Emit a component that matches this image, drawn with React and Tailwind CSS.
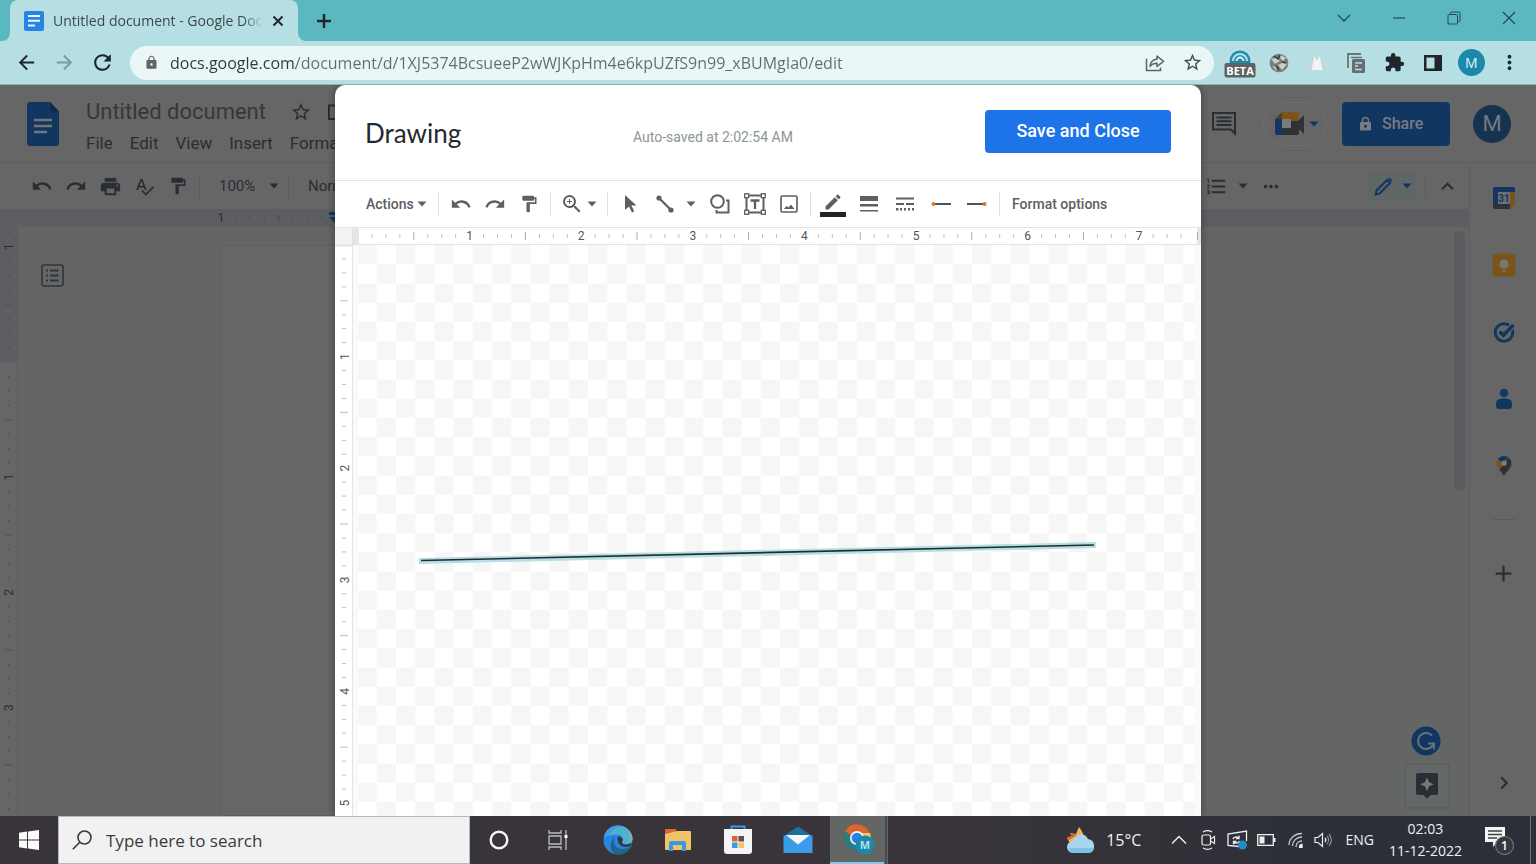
import React from "react";
import {
  MdUndo, MdRedo, MdPrint, MdSpellcheck, MdFormatPaint, MdZoomIn, MdStarBorder, MdLock, MdMoreVert,
  MdMoreHoriz, MdFormatListNumbered, MdKeyboardArrowUp, MdAdd, MdArrowBack, MdArrowForward,
  MdRefresh, MdExtension, MdEdit, MdChevronRight,
} from "react-icons/md";

const range = (a, b) => Array.from({ length: b - a + 1 }, (_, i) => a + i);

function Caret({ className = "" }) {
  return (
    <svg width="10" height="6" viewBox="0 0 10 6" className={className} aria-hidden="true">
      <path d="M0.5 0.5h9L5 5.5z" fill="currentColor" />
    </svg>
  );
}

function IconButton({ label, className = "", children }) {
  return (
    <button aria-label={label} className={`flex shrink-0 items-center justify-center ${className}`}>
      {children}
    </button>
  );
}

/* ---------- Browser ---------- */

function DocFavicon() {
  return (
    <svg width="20" height="20" viewBox="0 0 20 20" className="shrink-0" aria-hidden="true">
      <rect width="20" height="20" rx="2" fill="#2684e8" />
      <path d="M4 5h12M4 9.700h12M4 14.500h7" stroke="#eef8fa" strokeWidth="2" />
    </svg>
  );
}

function TabStrip() {
  return (
    <div className="flex h-[41px] shrink-0 items-stretch bg-[#5bb8c1]">
      <div className="relative ml-[10px] flex w-72 items-center rounded-t-lg bg-[#b6dfe4] pl-[14px]">
        <svg className="absolute -left-2 bottom-0" width="8" height="8" viewBox="0 0 8 8" aria-hidden="true">
          <path d="M8 0v8H0a8 8 0 0 0 8-8z" fill="#b6dfe4" />
        </svg>
        <svg className="absolute -right-2 bottom-0" width="8" height="8" viewBox="0 0 8 8" aria-hidden="true">
          <path d="M0 0v8h8a8 8 0 0 1-8-8z" fill="#b6dfe4" />
        </svg>
        <DocFavicon />
        <span className="ml-[9px] w-[211px] shrink-0 overflow-hidden whitespace-nowrap text-sm text-[#3c484c] [mask-image:linear-gradient(to_right,#000_90%,transparent)]">
          Untitled document - Google Docs
        </span>
        <IconButton label="Close tab" className="ml-1 w-5 text-[#20242b]">
          <svg width="12" height="12" viewBox="0 0 12 12"><path d="M1.500 1.500l9 9M10.500 1.500l-9 9" stroke="currentColor" strokeWidth="2" /></svg>
        </IconButton>
      </div>
      <IconButton label="New tab" className="ml-[14px] w-6 text-[#20242b]">
        <svg width="14" height="14" viewBox="0 0 14 14"><path d="M7 0v14M0 7h14" stroke="currentColor" strokeWidth="2.400" /></svg>
      </IconButton>
      <div className="ml-auto flex h-[35px] text-[#23495a]">
        <IconButton label="Search tabs" className="w-[55px]">
          <svg width="14" height="8" viewBox="0 0 14 8" fill="none"><path d="M1 1l6 6 6-6" stroke="currentColor" strokeWidth="1.300" /></svg>
        </IconButton>
        <IconButton label="Minimize" className="w-[55px]">
          <svg width="12" height="2" viewBox="0 0 12 2"><path d="M0 1h12" stroke="currentColor" strokeWidth="1.200" /></svg>
        </IconButton>
        <IconButton label="Restore" className="w-[55px]">
          <svg width="14" height="14" viewBox="0 0 14 14" fill="none" stroke="currentColor">
            <rect x="1" y="3.500" width="9.500" height="9.500" rx="1" />
            <path d="M3.500 3.500V2a1 1 0 0 1 1-1H12a1 1 0 0 1 1 1v7.500a1 1 0 0 1-1 1h-1.500" />
          </svg>
        </IconButton>
        <IconButton label="Close" className="w-[55px]">
          <svg width="14" height="14" viewBox="0 0 14 14"><path d="M1 1l12 12M13 1L1 13" stroke="currentColor" strokeWidth="1.300" /></svg>
        </IconButton>
      </div>
    </div>
  );
}

function AddressBar() {
  return (
    <div className="flex h-11 shrink-0 items-center border-b border-[#8db1b6] bg-[#b6dfe4] text-[#20242b]">
      <div className="ml-[7px] grid w-[115px] grid-cols-3">
        <IconButton label="Back"><MdArrowBack size={23} /></IconButton>
        <IconButton label="Forward" className="text-[#7e9a9e]"><MdArrowForward size={23} /></IconButton>
        <IconButton label="Reload"><MdRefresh size={25} /></IconButton>
      </div>
      <div className="ml-2 flex h-[34px] min-w-0 flex-1 items-center rounded-full bg-[#ebf7f7] pl-[14px] pr-2">
        <MdLock size={15} className="shrink-0 text-[#5f6366]" />
        <input
          aria-label="Address"
          spellCheck={false}
          defaultValue="docs.google.com/document/d/1XJ5374BcsueeP2wWJKpHm4e6kpUZfS9n99_xBUMgIa0/edit"
          className="ml-[11px] min-w-0 flex-1 bg-[linear-gradient(to_right,#2b3a3f_126px,#5d6e70_126px)] bg-clip-text text-base text-transparent outline-none"
        />
        <IconButton label="Share page" className="w-[38px] text-[#5b6669]">
          <svg width="20" height="18" viewBox="0 0 20 18" fill="none" stroke="currentColor" strokeWidth="1.500">
            <path d="M1.500 4.500V16.500H15.500V13.500" />
            <path d="M5 12.500C5.500 8 8 5.500 12 5.300V2L18.500 7.300L12 12.500V9.300C9 9.300 6.500 10.300 5 12.500z" strokeLinejoin="round" />
          </svg>
        </IconButton>
        <IconButton label="Bookmark this tab" className="ml-1 w-7 text-[#414b4f]"><MdStarBorder size={21} /></IconButton>
      </div>
      <div className="ml-[7px] mr-[7px] flex w-[308px] items-center">
        <IconButton label="Beta extension" className="flex-1">
          <svg width="32" height="30" viewBox="0 0 32 30">
            <circle cx="16" cy="13" r="10.500" fill="#1f8cac" />
            <path d="M9 13a7 7 0 0 1 14 0" stroke="#b6dfe4" strokeWidth="2" fill="none" />
            <path d="M12.500 13a3.500 3.500 0 0 1 7 0" stroke="#dff3f5" strokeWidth="1.800" fill="none" />
            <rect x="0.500" y="15" width="31" height="14.500" rx="2" fill="#5d6265" />
            <text x="16" y="26.500" textAnchor="middle" fontSize="11" fontWeight="700" fill="#fff" fontFamily="Open Sans">BETA</text>
          </svg>
        </IconButton>
        <IconButton label="Globe extension" className="flex-1">
          <svg width="20" height="20" viewBox="0 0 20 20">
            <circle cx="10" cy="10" r="9.300" fill="#787c7e" />
            <path d="M2 6l6-1 3 3-5 3zM12 2l5 3-3 3-3-3zM9 12l6-3 3 2-5 6zM3 13l4 1 1 4z" fill="#c9cdcd" />
            <path d="M5 3l4 3 2-4M13 9l4 1M7 13l3 4" stroke="#33383b" strokeWidth="1.300" fill="none" />
          </svg>
        </IconButton>
        <IconButton label="Peaks extension" className="flex-1">
          <svg width="20" height="17" viewBox="0 0 20 17">
            <path d="M8 1L0.500 16H8z" fill="#cdd3d4" /><path d="M12 1l7.500 15H12z" fill="#cdd3d4" />
            <path d="M7.500 2l2.500 5 2.500-5 3 14h-11z" fill="#f3f4f4" />
          </svg>
        </IconButton>
        <IconButton label="Copy extension" className="flex-1">
          <svg width="18" height="20" viewBox="0 0 18 20">
            <path d="M1 15V1h13" stroke="#6b7578" strokeWidth="1.800" fill="none" />
            <path d="M4 4.500h11" stroke="#6b7578" strokeWidth="1.500" />
            <rect x="5" y="6" width="13" height="14" rx="1.500" fill="#676d70" />
            <path d="M8 10h7M8 13h3M8 16.500h7" stroke="#b6dfe4" strokeWidth="1.400" />
          </svg>
        </IconButton>
        <IconButton label="Extensions" className="flex-1"><MdExtension size={21} /></IconButton>
        <IconButton label="Side panel" className="flex-1">
          <svg width="18" height="18" viewBox="0 0 18 18"><path d="M0 1h18v16H0zM2.500 3.500v11h8v-11z" fill="currentColor" fillRule="evenodd" /></svg>
        </IconButton>
        <IconButton label="Profile" className="flex-1">
          <span className="flex size-[27px] items-center justify-center rounded-full bg-[#1c88ab] text-sm text-[#e3f4f6]">M</span>
        </IconButton>
        <IconButton label="Browser menu" className="flex-1"><MdMoreVert size={23} /></IconButton>
      </div>
    </div>
  );
}

/* ---------- Editor behind the dialog ---------- */

function DocsHeader() {
  return (
    <header className="flex h-[78px] shrink-0 items-center border-b border-[#5c5e60] px-[25px] text-[#292d34]">
      <svg width="33" height="44" viewBox="0 0 33 44" className="ml-[2px] shrink-0" aria-label="Docs">
        <path d="M3 0h20l9 9.500V41a3 3 0 0 1-3 3H3a3 3 0 0 1-3-3V3a3 3 0 0 1 3-3z" fill="#11365f" />
        <path d="M23 0l9 9.500h-7a2 2 0 0 1-2-2z" fill="#0c2a4c" />
        <path d="M7 18h18M7 24h18M7 30h13" stroke="#747576" strokeWidth="2.400" />
      </svg>
      <div className="ml-[26px] pt-2">
        <div className="flex h-8 items-center">
          <h1 className="text-[22px] leading-8 text-[#37363f]">Untitled document</h1>
          <IconButton label="Star" className="ml-6"><MdStarBorder size={22} /></IconButton>
          <IconButton label="Move" className="ml-4">
            <svg width="20" height="18" viewBox="0 0 20 18" fill="none" stroke="currentColor" strokeWidth="2"><path d="M1 2.500h6l2 2h10V16H1z" /></svg>
          </IconButton>
        </div>
        <nav className="flex h-8 items-center gap-[17px] text-[17px]">
          {["File", "Edit", "View", "Insert", "Format"].map((m) => <button key={m}>{m}</button>)}
        </nav>
      </div>
      <div className="ml-auto flex items-center">
        <IconButton label="Open comment history">
          <svg width="26" height="25" viewBox="0 0 26 25" fill="none" stroke="currentColor" strokeWidth="2">
            <path d="M2 2h22v20.500l-4-4H2z" /><path d="M5.500 6.500h15M5.500 10.300h15M5.500 14h15" />
          </svg>
        </IconButton>
        <button aria-label="Join a call" className="ml-[26px] flex h-11 w-16 items-center justify-center gap-1 rounded-full border border-[#6e6f70] pl-1">
          <svg width="30" height="24" viewBox="0 0 30 24">
            <path d="M7 0h15a2 2 0 0 1 2 2v7H15V7H7z" fill="#7b531c" />
            <path d="M0 7L7 0v7z" fill="#54401f" />
            <path d="M0 7h7v16H2a2 2 0 0 1-2-2z" fill="#11365f" />
            <path d="M7 16h8V9h9v12a2 2 0 0 1-2 2H7z" fill="#2e3138" />
            <path d="M23 9l6-6v19l-6-6z" fill="#2e3138" />
            <rect x="7" y="7" width="9" height="9" fill="#7a7b7b" />
          </svg>
          <Caret className="text-[#11365f]" />
        </button>
        <button className="ml-[15px] flex h-11 w-[108px] items-center rounded bg-[#11365f] pl-[18px] text-base font-medium text-[#767c82]">
          <svg width="11" height="14" viewBox="0 0 11 14" aria-hidden="true">
            <path d="M2.500 6V3.500a3 3 0 0 1 6 0V6" fill="none" stroke="currentColor" strokeWidth="1.500" />
            <rect y="5" width="11" height="8.500" rx="1" fill="currentColor" /><circle cx="5.500" cy="9.300" r="1.500" fill="#11365f" />
          </svg>
          <span className="ml-[11px]">Share</span>
        </button>
        <button aria-label="Account" className="ml-[23px] flex size-[38px] items-center justify-center rounded-full bg-[#15334f] text-[22px] text-[#747a80]">M</button>
      </div>
    </header>
  );
}

function DocsToolbar() {
  return (
    <div className="flex h-[46px] shrink-0 items-center text-[#292d34]">
      <div className="ml-[25px] flex items-center">
        <IconButton label="Undo" className="w-[34px]"><MdUndo size={22} /></IconButton>
        <IconButton label="Redo" className="w-[34px]"><MdRedo size={22} /></IconButton>
        <IconButton label="Print" className="w-[34px]"><MdPrint size={23} /></IconButton>
        <IconButton label="Spelling" className="w-[34px]"><MdSpellcheck size={21} /></IconButton>
        <IconButton label="Paint format" className="w-[34px]"><MdFormatPaint size={20} /></IconButton>
      </div>
      <span className="ml-1 h-6 w-px bg-[#5a5c5e]" />
      <button className="ml-[19px] flex w-[60px] items-center justify-between text-[15px]">100%<Caret /></button>
      <span className="ml-[9px] h-6 w-px bg-[#5a5c5e]" />
      <button className="ml-[19px] text-[15px]">Normal</button>
      <div className="ml-auto flex items-center">
        <IconButton label="Numbered list"><MdFormatListNumbered size={23} /></IconButton>
        <Caret className="ml-[10px]" />
        <IconButton label="More" className="ml-3 w-[22px]"><MdMoreHoriz size={23} /></IconButton>
        <button aria-label="Editing mode" className="ml-[85px] flex h-[31px] w-[51px] items-center justify-center gap-[9px] rounded bg-[#606565] text-[#11365f]">
          <svg width="19" height="19" viewBox="0 0 19 19"><path d="M1.500 17.500l1-4L13 3l3 3L5.500 16.500z" fill="none" stroke="currentColor" strokeWidth="2" /><path d="M14 2l1.500-1.500 3 3L17 5z" fill="currentColor" /></svg>
          <Caret />
        </button>
        <span className="ml-[7px] h-6 w-px bg-[#5a5c5e]" />
        <IconButton label="Hide the menus" className="ml-[9px] mr-[9px]"><MdKeyboardArrowUp size={25} /></IconButton>
      </div>
    </div>
  );
}

function DocsVerticalRuler() {
  const zero = 135;
  const step = 14.4;
  return (
    <svg className="h-full w-[18px] shrink-0 bg-[#666]" aria-label="Vertical ruler">
      <rect width="18" height={zero} fill="#5d5e61" />
      <path d="M17.500 135V2000" stroke="#5c5e5e" />
      {range(-9, 31).map((i) => {
        const y = zero + i * step;
        if (i % 8 === 0) {
          if (i === 0) return null;
          return (
            <text key={i} transform={`translate(13 ${y}) rotate(-90)`} textAnchor="middle" fontSize="12" fill="#292d34">
              {Math.abs(i / 8)}
            </text>
          );
        }
        const r = i % 4 === 0 ? 4 : 1;
        return <path key={i} d={`M${8.5 - r} ${y}h${r * 2}`} stroke={i % 4 === 0 ? "#515356" : "#45484c"} />;
      })}
    </svg>
  );
}

function DocsHorizontalRuler() {
  return (
    <svg className="h-[18px] w-full shrink-0 bg-[#5d5e61]" aria-label="Horizontal ruler">
      <text x="221" y="13" textAnchor="middle" fontSize="12" fill="#292d34">1</text>
      {range(1, 7).map((i) => {
        const x = 221 + i * 14.4;
        const r = i === 4 ? 3 : 1;
        return <path key={i} d={`M${x} ${9 - r}v${r * 2}`} stroke="#45484c" />;
      })}
      <path d="M329 3h14v3h-14zM329 8h14l-7 7z" fill="#11365f" />
    </svg>
  );
}

const panelIcons = {
  Calendar: (
    <>
      <path d="M1 3a2 2 0 0 1 2-2h18a2 2 0 0 1 2 2v3H1z" fill="#11365f" />
      <path d="M1 6h5v12H1z" fill="#11365f" /><path d="M18 6h5v12h-5z" fill="#7b531c" />
      <path d="M1 18h17v5H3a2 2 0 0 1-2-2z" fill="#2e3138" /><path d="M18 18h5l-5 5z" fill="#7b531c" />
      <rect x="6" y="6" width="12" height="12" fill="#6b7075" />
      <text x="12" y="16" textAnchor="middle" fontSize="10" fontWeight="700" fill="#11365f">31</text>
    </>
  ),
  Keep: (
    <>
      <rect x="0.500" y="0.500" width="23" height="23" rx="2" fill="#7b531c" />
      <circle cx="12" cy="11" r="4.700" fill="#7a7771" /><path d="M10 18h4" stroke="#7a7771" strokeWidth="1.400" />
    </>
  ),
  Tasks: (
    <>
      <circle cx="12" cy="12.500" r="8.800" fill="none" stroke="#11365f" strokeWidth="3" />
      <path d="M7.500 12l3.500 3.500L21 5.500" stroke="#666" strokeWidth="6" fill="none" />
      <path d="M7.500 11.500l3.800 3.800L21.500 5" stroke="#11365f" strokeWidth="3.500" fill="none" />
    </>
  ),
  Contacts: (
    <>
      <circle cx="12" cy="6" r="4.200" fill="#11365f" />
      <path d="M4 17.500c0-4.500 2.500-6 8-6s8 1.500 8 6c0 3-1 4.500-2.500 4.500h-11C5 22 4 20.500 4 17.500z" fill="#11365f" />
    </>
  ),
  Maps: (
    <>
      <path d="M12 2a7.500 7.500 0 0 0-6 3l4 4 6.500-5.500A7.500 7.500 0 0 0 12 2z" fill="#11365f" />
      <path d="M6 5a7.500 7.500 0 0 0 0 9l1.500 2L13 10 8 7z" fill="#7b531c" />
      <path d="M16.500 3.500a7.500 7.500 0 0 1 1.500 10.500c-3 4-4.500 5-6 8.500-1-2.500-2.500-4-4.500-6.500z" fill="#2e3138" />
      <circle cx="12" cy="9.300" r="2.700" fill="#7a7b7b" />
    </>
  ),
};

function SidePanel() {
  return (
    <aside className="flex w-[67px] shrink-0 flex-col items-center border-l border-[#5c5f5e] pb-5 pl-px pt-[23px] text-[#292d34]">
      <div className="flex flex-col gap-[43px]">
        {Object.entries(panelIcons).map(([name, art]) => (
          <IconButton key={name} label={name} className="size-6">
            <svg width="24" height="24" viewBox="0 0 24 24">{art}</svg>
          </IconButton>
        ))}
      </div>
      <span className="mt-[41px] h-px w-6 shrink-0 bg-[#5a5c5e]" />
      <IconButton label="Get add-ons" className="mt-10"><MdAdd size={27} /></IconButton>
      <IconButton label="Hide side panel" className="mt-auto"><MdChevronRight size={26} /></IconButton>
    </aside>
  );
}

function DocsEditor() {
  return (
    <div className="flex min-h-0 flex-1">
      <div className="flex min-w-0 flex-1 flex-col">
        <DocsToolbar />
        <DocsHorizontalRuler />
        <div className="flex min-h-0 flex-1">
          <DocsVerticalRuler />
          <div className="flex min-w-0 flex-1 items-stretch bg-[#636664]">
            <div className="w-[202px] shrink-0 pl-[23px] pt-[37px] text-[#33343b]">
              <IconButton label="Show document outline">
                <svg width="23" height="23" viewBox="0 0 23 23" fill="none" stroke="currentColor">
                  <rect x="1" y="1" width="21" height="21" rx="2" strokeWidth="1.600" />
                  <path d="M5 6.500h2M9 6.500h8.500M5 11.500h2M9 11.500h8.500M5 16.500h2M9 16.500h8.500" strokeWidth="1.800" />
                </svg>
              </IconButton>
            </div>
            <div className="mt-[18px] w-[816px] border border-[#5b5d5d] bg-[#666]" />
            <div className="ml-auto flex flex-col items-end justify-between pb-[7px] pt-1">
              <div className="mr-1 h-[260px] w-[11px] rounded-full bg-[#5a5b5f]" />
              <div className="mr-[19px] flex flex-col items-center gap-[7px]">
                <IconButton label="Grammarly" className="mr-[3px]">
                  <svg width="30" height="30" viewBox="0 0 30 30">
                    <circle cx="15" cy="15" r="14.500" fill="#11365f" />
                    <path d="M21 9.500A8 8 0 1 0 22.500 18" fill="none" stroke="#687078" strokeWidth="2" />
                    <path d="M17 17.500h6v6" fill="none" stroke="#687078" strokeWidth="2" />
                  </svg>
                </IconButton>
                <IconButton label="Explore" className="size-[46px] rounded border-2 border-[#5d6060] bg-[#656666]">
                  <svg width="22" height="26" viewBox="0 0 22 26">
                    <path d="M2 0h18a2 2 0 0 1 2 2v18a2 2 0 0 1-2 2h-5.500L11 25.500 7.500 22H2a2 2 0 0 1-2-2V2a2 2 0 0 1 2-2z" fill="#292d34" />
                    <path d="M11 4.500l2 4.800 4.800 2-4.800 2-2 4.700-2-4.700-4.800-2 4.800-2z" fill="#77797a" />
                  </svg>
                </IconButton>
              </div>
            </div>
          </div>
        </div>
      </div>
      <SidePanel />
    </div>
  );
}

/* ---------- Drawing dialog ---------- */

const STEP = 13.95;

function HorizontalRuler() {
  return (
    <svg className="block h-[18px] w-full border-y border-[#e2e4e4] bg-white" aria-label="Horizontal ruler">
      <rect width="17" height="16" fill="#f2f3f3" />
      <path d="M17.500 0v16" stroke="#e2e4e4" />
      <rect x="18" width="6" height="16" fill="#e3e6e6" />
      <rect x="862" width="4" height="16" fill="#e3e6e6" />
      {range(1, 59).map((i) => {
        const x = 23 + i * STEP;
        if (i % 8 === 0) {
          return <text key={i} x={x} y="12" textAnchor="middle" fontSize="12" fill="#50585a">{i / 8}</text>;
        }
        return <path key={i} d={i % 4 === 0 ? `M${x} 4v8` : `M${x} 6v4`} stroke={i % 4 === 0 ? "#a4acad" : "#bcc3c4"} />;
      })}
      <path d="M862.500 4v8" stroke="#a4acad" />
    </svg>
  );
}

function VerticalRuler() {
  return (
    <svg className="block h-full w-[18px] shrink-0 border-r border-[#e2e4e4] bg-white" aria-label="Vertical ruler">
      <rect width="17" height="2" fill="#e9ebeb" />
      {range(1, 40).map((i) => {
        const y = i * STEP;
        if (i % 8 === 0) {
          return (
            <text key={i} transform={`translate(14 ${y}) rotate(-90)`} textAnchor="middle" fontSize="12" fill="#50585a">{i / 8}</text>
          );
        }
        return <path key={i} d={i % 4 === 0 ? `M5 ${y}h8` : `M7 ${y}h4`} stroke="#b9c0c1" />;
      })}
    </svg>
  );
}

function Canvas() {
  return (
    <svg className="block h-full min-w-0 flex-1 bg-[#fafafa]" aria-label="Drawing canvas">
      <defs>
        <pattern id="checker" width="38.400" height="38.400" patternUnits="userSpaceOnUse" x="4.600" y="0">
          <rect width="38.400" height="38.400" fill="#fff" />
          <path d="M0 0h19.200v19.200H0zM19.200 19.200h19.200v19.200H19.200z" fill="#f6f6f6" />
        </pattern>
      </defs>
      <rect x="4.600" width="837" height="100%" fill="url(#checker)" />
      <path d="M66 316L743 300" stroke="#b5dee5" strokeWidth="6" />
      <path d="M68 315.500L741 300" stroke="#252a30" strokeWidth="1.600" />
    </svg>
  );
}

function Separator({ className }) {
  return <span className={`h-6 w-px shrink-0 bg-[#dfe1e1] ${className}`} />;
}

function DrawingToolbar() {
  return (
    <div className="flex h-[46px] items-center pl-[31px] text-[#5c6062]">
      <button className="flex w-[61px] items-center justify-between text-sm font-medium">Actions<Caret /></button>
      <Separator className="ml-[11px] mr-[5px]" />
      <IconButton label="Undo" className="w-[34px]"><MdUndo size={22} /></IconButton>
      <IconButton label="Redo" className="w-[34px]"><MdRedo size={22} /></IconButton>
      <IconButton label="Paint format" className="w-[34px]"><MdFormatPaint size={20} /></IconButton>
      <Separator className="mx-1" />
      <IconButton label="Zoom" className="w-[34px]"><MdZoomIn size={24} /></IconButton>
      <Caret className="-ml-[2px] shrink-0" />
      <Separator className="ml-[10px] mr-[5px]" />
      <IconButton label="Select" className="w-[34px]">
        <svg width="13" height="18" viewBox="0 0 13 18"><path d="M1 0l11.500 10.500H7.300l3 5.700-2.300 1.200-3-6L1 15z" fill="currentColor" /></svg>
      </IconButton>
      <IconButton label="Line" className="w-9">
        <svg width="18" height="18" viewBox="0 0 18 18"><path d="M3 3l12 12" stroke="currentColor" strokeWidth="2.200" /><circle cx="3" cy="3" r="2.600" fill="currentColor" /><circle cx="15" cy="15" r="2.600" fill="currentColor" /></svg>
      </IconButton>
      <Caret className="ml-[3px] mr-[6px] shrink-0" />
      <IconButton label="Shape" className="w-9">
        <svg width="20" height="20" viewBox="0 0 20 20" fill="none" stroke="currentColor" strokeWidth="2"><circle cx="7.500" cy="7.500" r="6.300" /><path d="M16 6.500h2.500V18.500H6.500V16" /></svg>
      </IconButton>
      <IconButton label="Text box" className="w-[34px]">
        <svg width="22" height="22" viewBox="0 0 22 22" fill="none" stroke="currentColor">
          <rect x="2.500" y="2.500" width="17" height="17" strokeWidth="2" />
          <g fill="#fff" strokeWidth="1.300"><rect x="0.700" y="0.700" width="4" height="4" /><rect x="17.300" y="0.700" width="4" height="4" /><rect x="0.700" y="17.300" width="4" height="4" /><rect x="17.300" y="17.300" width="4" height="4" /></g>
          <path d="M6.500 7.500h9M11 7.500v8.500" strokeWidth="2.300" />
        </svg>
      </IconButton>
      <IconButton label="Image" className="w-[34px]">
        <svg width="18" height="18" viewBox="0 0 18 18"><rect x="1" y="1" width="16" height="16" rx="1.500" fill="none" stroke="currentColor" strokeWidth="1.700" /><path d="M4 14l2.500-3 2 1.500 2.500-3 1.500 2 2 2.500z" fill="currentColor" /></svg>
      </IconButton>
      <Separator className="mx-1" />
      <IconButton label="Line color" className="w-9">
        <span className="flex flex-col items-center"><MdEdit size={20} /><span className="h-[5px] w-[26px] bg-[#20252c]" /></span>
      </IconButton>
      <IconButton label="Line weight" className="w-9">
        <svg width="18" height="16" viewBox="0 0 18 16" fill="currentColor"><path d="M0 0h18v5H0zM0 8h18v2.500H0zM0 14h18v1.500H0z" /></svg>
      </IconButton>
      <IconButton label="Line dash" className="w-9">
        <svg width="18" height="14" viewBox="0 0 18 14" fill="currentColor"><path d="M0 0.500h18v2H0zM0 6h8v2H0zM10 6h8v2h-8zM0 11h2.500v2.500H0zM4 11h2v2.500H4zM8 11h2v2.500H8zM12 11h2v2.500h-2zM16 11h2v2.500h-2z" /></svg>
      </IconButton>
      <IconButton label="Line start" className="w-9">
        <svg width="20" height="6" viewBox="0 0 20 6"><path d="M2 3h18" stroke="#4e5254" strokeWidth="2" /><circle cx="2.500" cy="3" r="2" fill="#e0751f" /></svg>
      </IconButton>
      <IconButton label="Line end" className="w-9">
        <svg width="20" height="6" viewBox="0 0 20 6"><path d="M0 3h18" stroke="#4e5254" strokeWidth="2" /><circle cx="17.500" cy="3" r="2" fill="#e0751f" /></svg>
      </IconButton>
      <Separator className="ml-1 mr-3" />
      <button className="whitespace-nowrap text-sm font-medium">Format options</button>
    </div>
  );
}

function DrawingDialog() {
  return (
    <div className="absolute inset-0 flex justify-center">
      <section role="dialog" aria-label="Drawing" className="flex h-full w-[866px] flex-col overflow-hidden rounded-t-[10px] bg-white shadow-[0_0_8px_rgba(0,0,0,0.35)]">
        <div className="flex h-24 shrink-0 items-center border-b border-[#e2e4e4] px-[30px] pb-[3px]">
          <h2 className="w-[268px] pt-1 font-[Lato] text-[26px] text-[#25292e]">Drawing</h2>
          <p className="mt-3 text-sm text-[#8b9596]">Auto-saved at 2:02:54 AM</p>
          <button className="ml-auto h-[43px] w-[186px] rounded bg-[#1c74e8] text-lg font-medium text-white">Save and Close</button>
        </div>
        <DrawingToolbar />
        <HorizontalRuler />
        <div className="flex min-h-0 flex-1">
          <VerticalRuler />
          <Canvas />
        </div>
      </section>
    </div>
  );
}

/* ---------- Taskbar ---------- */

function Taskbar() {
  return (
    <footer className="flex h-12 shrink-0 items-stretch bg-[linear-gradient(to_right,#39343a_60%,#2b2f37_90%)] font-['Open_Sans',sans-serif] text-[#eef1f1]">
      <IconButton label="Start" className="w-[58px]">
        <svg width="20" height="20" viewBox="0 0 20 20" fill="#fafafa"><path d="M0 2.800L8 1.600V9.500H0zM9 1.400L20 0v9.500H9zM0 10.500h8v8L0 17.300zM9 10.500h11V20L9 18.600z" /></svg>
      </IconButton>
      <label className="flex w-[412px] items-center border border-[#b4babb] bg-[#f1f1f1] pl-[13px] text-[#363b41]">
        <svg width="20" height="20" viewBox="0 0 20 20" fill="none" stroke="currentColor" strokeWidth="1.600"><circle cx="12.500" cy="7.500" r="6.500" /><path d="M8 12L0.800 19.300" /></svg>
        <input aria-label="Search" placeholder="Type here to search" className="ml-[14px] min-w-0 flex-1 bg-transparent pt-[2px] text-[17px] outline-none placeholder:text-[#363b41]" />
      </label>
      <IconButton label="Cortana" className="w-[58px]">
        <svg width="20" height="20" viewBox="0 0 20 20"><circle cx="10" cy="10" r="8.300" fill="none" stroke="#f4f4f4" strokeWidth="2.400" /></svg>
      </IconButton>
      <IconButton label="Task view" className="w-[60px]">
        <svg width="20" height="20" viewBox="0 0 20 20" fill="none" stroke="#b9bcbd" strokeWidth="1.300"><path d="M1 0v3h12V0M1 20v-3h12v3M1 6h12v8H1zM18 0v20" /><path d="M16.500 6.500h3" strokeWidth="3" stroke="#fff" /></svg>
      </IconButton>
      <IconButton label="Edge" className="w-[60px]">
        <svg width="30" height="30" viewBox="0 0 30 30">
          <circle cx="15" cy="15" r="14.500" fill="#2784e0" />
          <path d="M1 12C3 4 9 0.500 15 0.500c8 0 14.500 6 14.500 13 0 4-3 6-7 6-3 0-4-1.500-3-3 2-3-1-7-6-7C8 9.500 3 12 1 12z" fill="#4fb2cc" />
          <path d="M1 12C3 4 9 0.500 15 0.500c2 0 4 .5 6 1.500-8-.5-13 3-14 7.500z" fill="#4199e8" />
          <path d="M12 12c-3 5 0 12 7 12 4 0 7-1.500 9-3-3 6-8 8.500-13 8.500-6 0-8-6-7-10.500.6-3 2-5.500 4-7z" fill="#1d6688" />
          <path d="M15 11.500c3 0 5 2 4.500 4-1 2 0 4 3 4 2 0 4-.5 5.500-2L28.500 20c-3 2-6 2.500-9 1.500-4-1.500-5.500-6-4.500-10z" fill="#39343a" />
          <path d="M25 5c3 2.500 4.500 5.500 4.500 8.500 0 2-1 4-3 5V9z" fill="#88a9b1" />
        </svg>
      </IconButton>
      <IconButton label="File Explorer" className="w-[60px]">
        <svg width="28" height="24" viewBox="0 0 28 24">
          <path d="M1 1h11v8H1z" fill="#dd6330" /><path d="M1 6l12-3h13a1 1 0 0 1 1 1v17a1 1 0 0 1-1 1H2a1 1 0 0 1-1-1z" fill="#f0c368" />
          <path d="M5 23v-8a2 2 0 0 1 2-2h13a2 2 0 0 1 2 2v8h-4v-6h-9v6z" fill="#3a99e4" />
        </svg>
      </IconButton>
      <IconButton label="Microsoft Store" className="w-[60px]">
        <svg width="28" height="30" viewBox="0 0 28 30">
          <path d="M7.500 6V1.500h13V6" fill="none" stroke="#3a99e4" strokeWidth="2" /><path d="M0 4h28v22a3 3 0 0 1-3 3H3a3 3 0 0 1-3-3z" fill="#f4f4f4" />
          <path d="M8 11h5.500v5.500H8z" fill="#dd6330" /><path d="M14.500 11H20v5.500h-5.500z" fill="#5d5048" /><path d="M8 17.500h5.500V23H8z" fill="#3a99e4" /><path d="M14.500 17.500H20V23h-5.500z" fill="#f0c368" />
        </svg>
      </IconButton>
      <IconButton label="Mail" className="w-[60px]">
        <svg width="30" height="28" viewBox="0 0 30 28"><path d="M0.500 10L15 0.500 29.500 10z" fill="#1b6f9d" /><path d="M0.500 9.500h29V27H0.500z" fill="#3b9be8" /><path d="M3 9h24L15 18.500z" fill="#f6f6f6" /></svg>
      </IconButton>
      <IconButton label="Chrome" className="ml-[2px] w-[54px] border-b-2 border-[#86c5ee] bg-[#646664]">
        <svg width="32" height="32" viewBox="0 0 32 32" className="ml-1">
          <path d="M14 15L2 8.500A13.500 13.500 0 0 1 26.500 10H14z" fill="#dd6330" /><path d="M14 10h13c1.500 4 .5 10-3 14l-10-9z" fill="#f0c368" />
          <path d="M2 8.500c-3 8 0 17 10 19.500l3-9z" fill="#2c7d80" /><circle cx="14" cy="15" r="7" fill="#f4f4f4" /><circle cx="14" cy="15" r="5.300" fill="#2583e6" />
          <circle cx="22" cy="22" r="9.500" fill="#1c88ab" /><text x="22" y="26" textAnchor="middle" fontSize="11" fontWeight="700" fill="#b6dfe4">M</text>
        </svg>
      </IconButton>
      <span className="w-1 border-x border-[#66686a] bg-[#4a484c]" />

      <div className="ml-auto flex items-center">
        <button className="flex items-center gap-[10px] text-base">
          <svg width="30" height="30" viewBox="0 0 30 30" aria-hidden="true">
            <path d="M13 2c3 4 5 7 5 12L4 18 1 13l5-2-2-3 6 1z" fill="#f2b257" /><path d="M3 15L1 12l5-1-2-3 7 2z" fill="#dd6330" />
            <path d="M7 28a6 6 0 0 1 0-12 8 8 0 0 1 15-2 7.200 7.200 0 0 1 1 14z" fill="#a9d6ec" /><path d="M3 23h25a6 6 0 0 1-5 5H7a5 5 0 0 1-4-5z" fill="#7fc1e6" />
          </svg>
          15°C
        </button>
        <IconButton label="Show hidden icons" className="ml-[30px]">
          <svg width="16" height="10" viewBox="0 0 16 10"><path d="M1 8.500l7-7 7 7" fill="none" stroke="currentColor" strokeWidth="1.400" /></svg>
        </IconButton>
        <IconButton label="Meet now" className="ml-[14px]">
          <svg width="15" height="20" viewBox="0 0 15 20" fill="none" stroke="currentColor" strokeWidth="1.200"><rect x="1" y="5" width="8.500" height="10" rx="1.500" /><path d="M9.500 9l4-2.500v7l-4-2.500M2 2c2.500-1.500 6.500-1.500 9 0M2 18c2.500 1.500 6.500 1.500 9 0" /></svg>
        </IconButton>
        <IconButton label="Update" className="ml-[11px]">
          <svg width="21" height="20" viewBox="0 0 21 20" fill="none" stroke="currentColor" strokeWidth="1.300"><path d="M12 16.500L1 15.500V4L19.500 1v10" /><path d="M6 9c.5-2 4-3 6-.5M12 5.500v3H9M12.500 11c-1 2.500-4 3-6 .5M6.500 14.500v-3h3" /><circle cx="15.500" cy="15" r="4.500" fill="#1f8cc4" stroke="none" /></svg>
        </IconButton>
        <IconButton label="Battery" className="ml-[9px]">
          <svg width="19" height="12" viewBox="0 0 19 12"><path d="M0.700 0.700h15.600v10.600H0.700z" fill="none" stroke="currentColor" strokeWidth="1.300" /><path d="M2.500 2.500h5v7h-5zM17 4h1.500v4H17z" fill="currentColor" /></svg>
        </IconButton>
        <IconButton label="Network" className="ml-3">
          <svg width="16" height="16" viewBox="0 0 16 16" fill="none" stroke="currentColor" strokeWidth="1.300"><path d="M1 13C1 6.500 7 1.500 14 1.500M4.500 14c0-5 4-9 9.500-9M8 15c0-3.500 2.500-6 6-6" opacity="0.800" /><path d="M11.500 15.500c0-2 1-3 2.500-3v3z" fill="currentColor" /></svg>
        </IconButton>
        <IconButton label="Volume" className="ml-[10px]">
          <svg width="19" height="16" viewBox="0 0 19 16" fill="none" stroke="currentColor" strokeWidth="1.200"><path d="M1 5.500h3L8.500 1.500v13L4 10.500H1z" /><path d="M11 6a3 3 0 0 1 0 4" /><path d="M13 4a6 6 0 0 1 0 8M15 2a9 9 0 0 1 0 12" opacity="0.500" /></svg>
        </IconButton>
        <span className="ml-3 text-sm">ENG</span>
        <time className="ml-[15px] text-center text-sm leading-[22px]">02:03<br />11-12-2022</time>
        <button aria-label="Notifications, 1 new" className="ml-[23px] mr-[15px]">
          <svg width="30" height="30" viewBox="0 0 30 30">
            <path d="M0 2h20v15h-8l-4 5v-5H0z" fill="#f4f4f4" /><path d="M3 6h14M3 9.500h14M3 13h9" stroke="#3a4148" strokeWidth="1.300" />
            <circle cx="19.500" cy="20.500" r="9" fill="#34373e" stroke="#6e7276" strokeWidth="1.200" />
            <text x="19.500" y="25" textAnchor="middle" fontSize="12" fontWeight="600" fill="#fff">1</text>
          </svg>
        </button>
      </div>
      <span className="mr-[5px] w-px bg-[#6e7276]" />
    </footer>
  );
}

export default function App() {
  return (
    <div className="flex h-screen min-h-[600px] flex-col overflow-hidden font-[Roboto,sans-serif]">
      <div className="shrink-0 font-['Open_Sans',sans-serif]">
        <TabStrip />
        <AddressBar />
      </div>
      <main className="relative flex min-h-0 flex-1 flex-col overflow-hidden bg-[#666]">
        <DocsHeader />
        <DocsEditor />
        <DrawingDialog />
      </main>
      <Taskbar />
    </div>
  );
}
